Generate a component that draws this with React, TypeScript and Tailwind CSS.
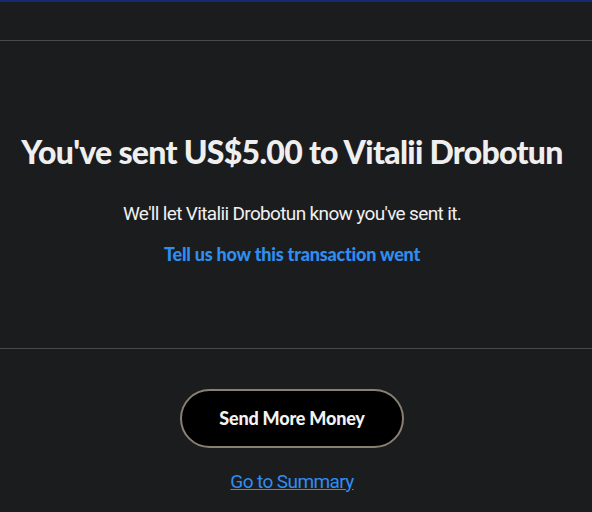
export default function App() {
  return (
    <div
      className="flex min-h-[512px] w-full flex-col bg-[#1b1c1e] text-[#ececec]"
      style={{ fontFamily: "Lato, 'Liberation Sans', sans-serif" }}
    >
      <div className="h-[2px] bg-[#142a6e]" />
      <div className="h-[38px]" />
      <div className="h-px bg-[#4a4a4a]" />

      {/* confirmation */}
      <div className="flex h-[307px] flex-col items-center pr-[8px] pt-[91px]">
        <h1 className="whitespace-nowrap text-[32px] font-black leading-[40px] tracking-[-0.72px] text-[#efefef]">
          You've sent US$5.00 to Vitalii Drobotun
        </h1>
        <p
          className="mt-[30px] text-[19px] leading-[24px] tracking-[-0.65px] text-[#f0f0f0]"
          style={{ fontFamily: "Roboto, 'Liberation Sans', sans-serif" }}
        >
          We'll let Vitalii Drobotun know you've sent it.
        </p>
        <a className="mt-[16px] text-[18px] font-black leading-[24px] tracking-[-0.2px] text-[#2e8ef2]">
          Tell us how this transaction went
        </a>
      </div>

      <div className="h-px bg-[#4a4a4a]" />

      <div className="flex flex-col items-center pr-[8px] pt-[40px]">
        <button className="h-[59px] w-[224px] rounded-full border-2 border-[#8a8072] bg-black text-[18px] font-black tracking-[-0.2px] text-[#f2f2f2]">
          Send More Money
        </button>
        <a
          className="mt-[22px] text-[19px] leading-[24px] tracking-[-0.6px] text-[#2e8ef2] underline"
          style={{ fontFamily: "Roboto, 'Liberation Sans', sans-serif" }}
        >
          Go to Summary
        </a>
      </div>
    </div>
  );
}
